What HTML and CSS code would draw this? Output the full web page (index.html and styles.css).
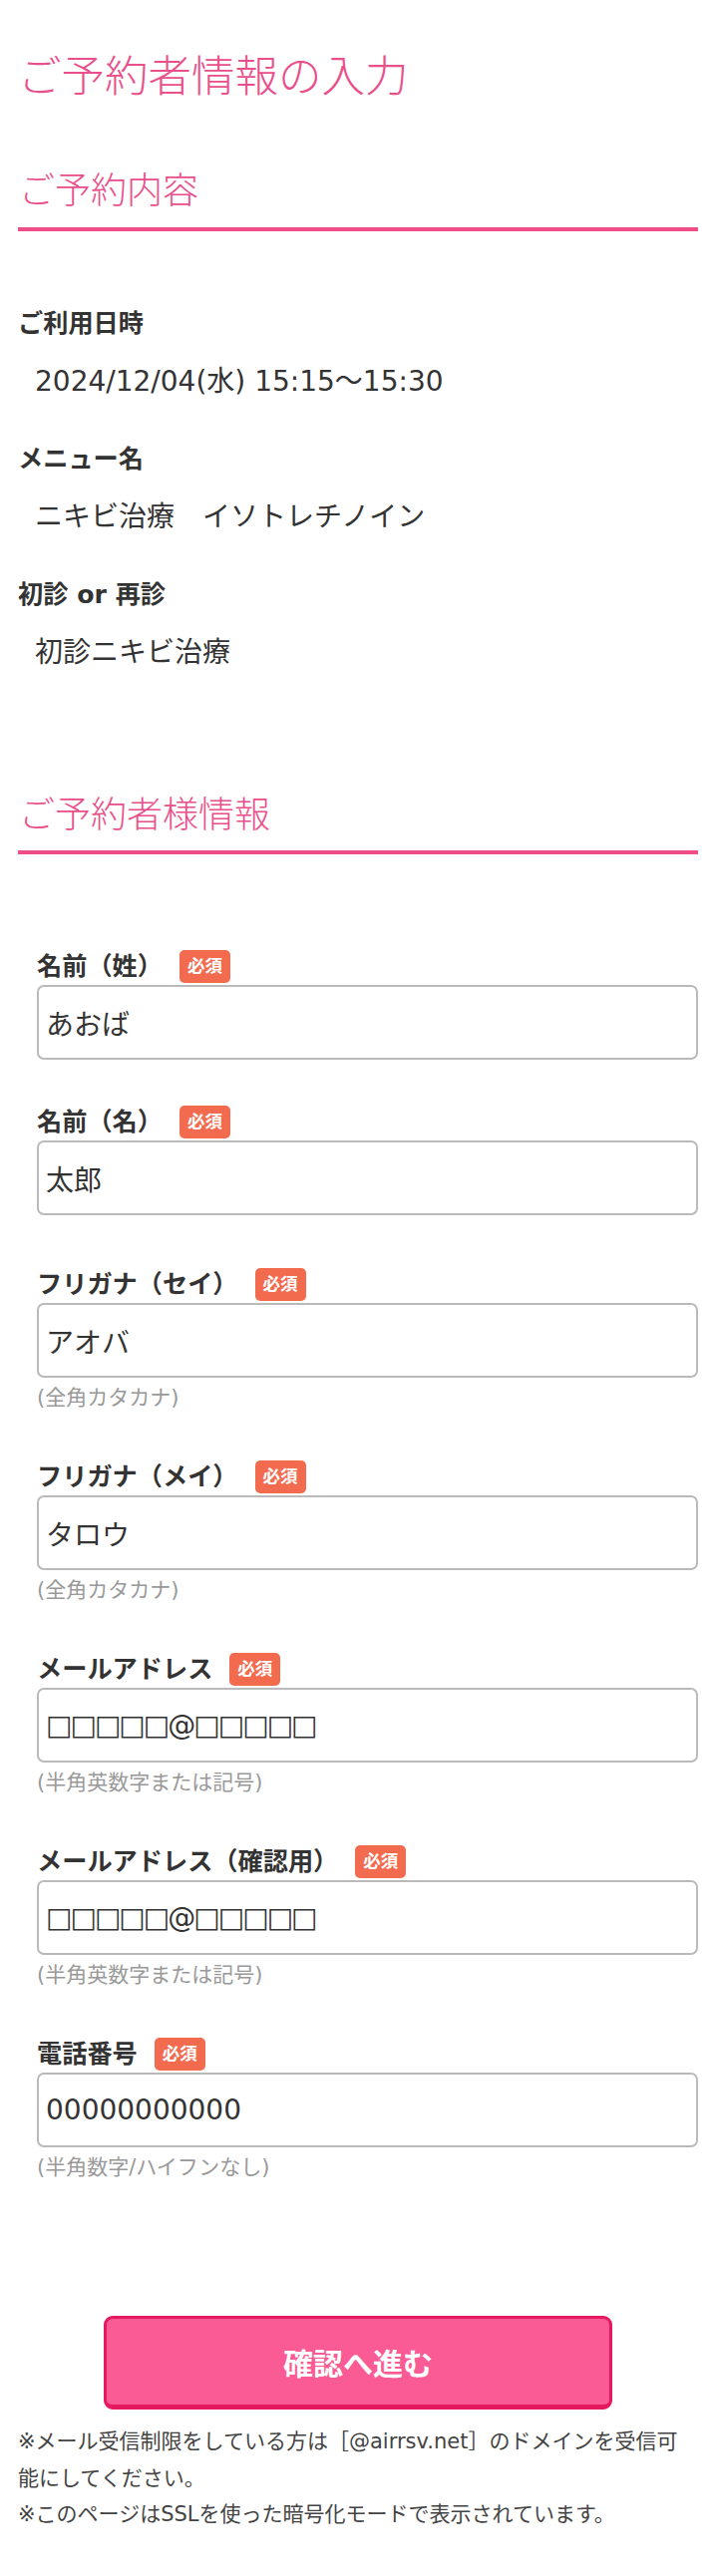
FILE: index.html
```html
<!DOCTYPE html>
<html lang="ja">
<head>
<meta charset="utf-8">
<title>ご予約者情報の入力</title>
<link rel="stylesheet" href="styles.css">
</head>
<body>
<main class="page">
  <h1 class="page-title">ご予約者情報の入力</h1>

  <section class="block">
    <h2 class="section-title">ご予約内容</h2>
    <dl class="summary">
      <dt>ご利用日時</dt>
      <dd>2024/12/04(水) 15:15〜15:30</dd>
      <dt>メニュー名</dt>
      <dd>ニキビ治療　イソトレチノイン</dd>
      <dt>初診 or 再診</dt>
      <dd>初診ニキビ治療</dd>
    </dl>
  </section>

  <section class="block">
    <h2 class="section-title section-title--second">ご予約者様情報</h2>
    <form class="form">
      <div class="field">
        <div class="field-head"><label class="field-label" for="sei">名前（姓）</label><span class="badge">必須</span></div>
        <input class="field-input" id="sei" type="text" value="あおば">
      </div>
      <div class="field field--wide">
        <div class="field-head"><label class="field-label" for="mei">名前（名）</label><span class="badge">必須</span></div>
        <input class="field-input" id="mei" type="text" value="太郎">
      </div>
      <div class="field">
        <div class="field-head"><label class="field-label" for="kana-sei">フリガナ（セイ）</label><span class="badge">必須</span></div>
        <input class="field-input" id="kana-sei" type="text" value="アオバ">
        <p class="field-hint">(全角カタカナ)</p>
      </div>
      <div class="field">
        <div class="field-head"><label class="field-label" for="kana-mei">フリガナ（メイ）</label><span class="badge">必須</span></div>
        <input class="field-input" id="kana-mei" type="text" value="タロウ">
        <p class="field-hint">(全角カタカナ)</p>
      </div>
      <div class="field">
        <div class="field-head"><label class="field-label" for="mail">メールアドレス</label><span class="badge">必須</span></div>
        <input class="field-input field-input--mail" id="mail" type="text" value="□□□□□@□□□□□">
        <p class="field-hint">(半角英数字または記号)</p>
      </div>
      <div class="field">
        <div class="field-head"><label class="field-label" for="mail2">メールアドレス（確認用）</label><span class="badge">必須</span></div>
        <input class="field-input field-input--mail" id="mail2" type="text" value="□□□□□@□□□□□">
        <p class="field-hint">(半角英数字または記号)</p>
      </div>
      <div class="field">
        <div class="field-head"><label class="field-label" for="tel">電話番号</label><span class="badge">必須</span></div>
        <input class="field-input" id="tel" type="text" value="00000000000">
        <p class="field-hint">(半角数字/ハイフンなし)</p>
      </div>
    </form>
  </section>

  <div class="actions">
    <button class="submit" type="button">確認へ進む</button>
  </div>

  <div class="notes">
    <p>※メール受信制限をしている方は［@airrsv.net］のドメインを受信可能にしてください。</p>
    <p>※このページはSSLを使った暗号化モードで表示されています。</p>
  </div>
</main>
</body>
</html>
```

FILE: styles.css
```css
* {
  box-sizing: border-box;
}

html,
body {
  margin: 0;
  background: #ffffff;
}

body {
  font-family: "DejaVu Sans", "Noto Sans CJK JP", sans-serif;
  color: #333333;
}

.page {
  padding: 47px 14px 40px 18px;
}

.page-title {
  margin: 0;
  font-size: 43.5px;
  line-height: 60px;
  font-weight: 300;
  color: #e9508b;
}

.section-title {
  margin: 60px 0 0;
  padding: 0 0 11px 1px;
  font-size: 36px;
  line-height: 50px;
  font-weight: 300;
  color: #e9508b;
  border-bottom: 4px solid #ee4d87;
}

.section-title--second {
  margin-top: 118px;
  padding-bottom: 10px;
}

.summary {
  margin: 75px 0 0;
}

.summary dt {
  margin-top: 40px;
  font-size: 25.2px;
  line-height: 36px;
  font-weight: 700;
  color: #333333;
}

.summary dt:first-child {
  margin-top: 0;
}

.summary dd {
  margin: 20px 0 0;
  padding-left: 17px;
  font-size: 28px;
  line-height: 40px;
  color: #333333;
}

.form {
  margin: 96px 0 0;
  padding-left: 19px;
}

.field {
  margin-bottom: 46px;
}

.field--wide {
  margin-bottom: 53px;
}

.field:last-child {
  margin-bottom: 0;
}

.field-head {
  display: flex;
  align-items: center;
  gap: 17px;
  height: 33px;
}

.field-label {
  font-size: 25.2px;
  line-height: 33px;
  font-weight: 700;
  color: #333333;
}

.badge {
  height: 33px;
  padding: 0 8px;
  border-radius: 5px;
  background: #f36b4f;
  color: #ffffff;
  font-size: 17.5px;
  line-height: 33px;
  font-weight: 700;
}

.field-input {
  display: block;
  width: 100%;
  height: 75px;
  margin: 2px 0 0;
  padding: 0 7px;
  border: 2px solid #bababa;
  border-radius: 7px;
  background: #ffffff;
  font: inherit;
  font-size: 28px;
  color: #333333;
  outline: none;
}

.field-input--mail {
  letter-spacing: -2px;
}

.field-hint {
  margin: 4px 0 0;
  font-size: 21px;
  line-height: 33px;
  color: #999999;
}

.actions {
  display: flex;
  justify-content: center;
  margin-top: 132px;
}

.submit {
  width: 510px;
  height: 94px;
  padding: 0;
  border: 3px solid #e5195f;
  border-bottom-width: 5px;
  border-radius: 9px;
  background: #fa5b94;
  color: #ffffff;
  font: inherit;
  font-size: 30px;
  font-weight: 700;
}

.notes {
  margin-top: 14px;
  font-size: 21px;
  line-height: 36.5px;
  color: #444444;
}

.notes p {
  margin: 0;
}
```
